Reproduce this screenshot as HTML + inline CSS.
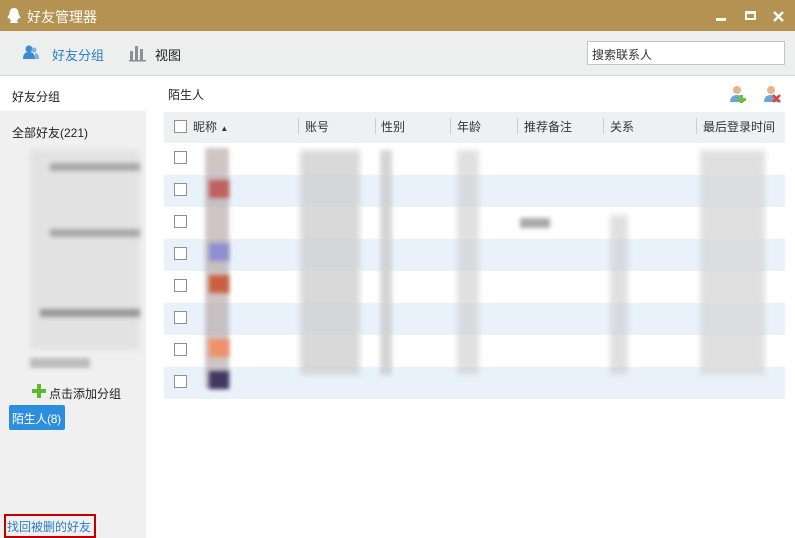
<!DOCTYPE html><html><head><meta charset="utf-8"><style>
*{margin:0;padding:0;box-sizing:border-box}
body{width:795px;height:538px;overflow:hidden;font-family:"Liberation Sans","Noto Sans CJK SC",sans-serif;font-size:12px;color:#222;background:#fff;position:relative}
.a{position:absolute;white-space:nowrap}
.g{position:absolute;background:#c8c8c8}
.cb{position:absolute;width:13px;height:13px;border:1px solid #8f8f8f;background:#fff}
.th{position:absolute;top:118px;font-size:12px;color:#333;white-space:nowrap}
.sep{position:absolute;top:118px;width:1px;height:16px;background:#ccc}
</style></head><body>
<div class="a" style="left:0;top:0;width:795px;height:31px;background:#b49252"></div>
<svg class="a" style="left:6px;top:7px" width="16" height="17" viewBox="0 0 16 17"><path d="M8 1C5 1 3.5 3.5 3.5 6c0 1-1.5 3-2 5 .5 1 1.5 0 2-.5-.3 1.5 1 3 2 3.5-1 .5-2 1-1 2h7c1-1 0-1.5-1-2 1-.5 2.3-2 2-3.5.5.5 1.5 1.5 2 .5-.5-2-2-4-2-5 0-2.5-1.5-5-4.5-5z" fill="#fff"/></svg>
<div class="a" style="left:27px;top:7px;color:#fff;font-size:14px">好友管理器</div>
<div class="a" style="left:716px;top:18px;width:10px;height:3px;background:#fff"></div>
<div class="a" style="left:745px;top:11px;width:11px;height:9px;border:2px solid #fff;border-top-width:3px"></div>
<svg class="a" style="left:773px;top:11px" width="11" height="11"><path d="M1 1l9 9M10 1l-9 9" stroke="#fff" stroke-width="2.4"/></svg>
<div class="a" style="left:0;top:31px;width:795px;height:45px;background:#edeeee;border-bottom:1px solid #d8d8d8"></div>
<svg class="a" style="left:22px;top:45px" width="18" height="16"><circle cx="7" cy="4" r="3.5" fill="#3b8bd0"/><path d="M1 14c0-5 2-7 6-7s6 2 6 7z" fill="#3b8bd0"/><circle cx="12" cy="5" r="2.5" fill="#7fb4e0"/><path d="M13 14h4c0-4-1-6-4-6z" fill="#7fb4e0"/></svg>
<div class="a" style="left:52px;top:45px;color:#2e7dc4;font-size:13px">好友分组</div>
<svg class="a" style="left:129px;top:44px" width="18" height="18"><rect x="1" y="7" width="3" height="10" fill="#8a8f96"/><rect x="6" y="2" width="3" height="15" fill="#8a8f96"/><rect x="11" y="5" width="3" height="12" fill="#8a8f96"/><rect x="0" y="16" width="17" height="1.5" fill="#8a8f96"/></svg>
<div class="a" style="left:155px;top:45px;font-size:13px">视图</div>
<div class="a" style="left:587px;top:41px;width:198px;height:24px;background:#fff;border:1px solid #c4c4c4;padding:4px 4px;font-size:12px;color:#333">搜索联系人</div>
<div class="a" style="left:0;top:77px;width:146px;height:461px;background:#f0f0f0"></div>
<div class="a" style="left:0;top:77px;width:146px;height:34px;background:#fff"></div>
<div class="a" style="left:12px;top:88px">好友分组</div>
<div class="a" style="left:12px;top:124px">全部好友(221)</div>
<div class="a" style="left:30px;top:150px;width:110px;height:200px;background:#ddd;filter:blur(3px);opacity:.7"></div>
<div class="g" style="left:50px;top:163px;width:90px;height:8px;background:#aaa;filter:blur(2px)"></div>
<div class="g" style="left:50px;top:229px;width:90px;height:8px;background:#aaa;filter:blur(2px)"></div>
<div class="g" style="left:40px;top:309px;width:100px;height:8px;background:#999;filter:blur(2px)"></div>
<div class="g" style="left:30px;top:358px;width:60px;height:10px;background:#bbb;filter:blur(2px)"></div>
<svg class="a" style="left:32px;top:384px" width="14" height="14"><path d="M5 0h4v5h5v4H9v5H5V9H0V5h5z" fill="#5cb82f"/></svg>
<div class="a" style="left:49px;top:385px">点击添加分组</div>
<div class="a" style="left:9px;top:405px;width:56px;height:25px;background:#2d8ee0;border-radius:2px;color:#fff;padding:5px 3px;font-size:12px;letter-spacing:-0.3px">陌生人(8)</div>
<div class="a" style="left:4px;top:514px;width:92px;height:24px;border:2px solid #c00000"></div>
<div class="a" style="left:7px;top:518px;color:#2e7dc4">找回被删的好友</div>
<div class="a" style="left:168px;top:86px">陌生人</div>
<svg class="a" style="left:729px;top:85px" width="18" height="18"><circle cx="8" cy="5" r="4" fill="#e8b48c"/><path d="M1 17c0-5 3-7 7-7s7 2 7 7z" fill="#6aa6d8"/><path d="M11 10h3v3h3v3h-3v3h-3v-3H8v-3h3z" fill="#6cc03a"/></svg>
<svg class="a" style="left:763px;top:85px" width="18" height="18"><circle cx="8" cy="5" r="4" fill="#e8b48c"/><path d="M1 17c0-5 3-7 7-7s7 2 7 7z" fill="#6aa6d8"/><path d="M10 10l7 7M17 10l-7 7" stroke="#e04040" stroke-width="2.5"/></svg>
<div class="a" style="left:164px;top:112px;width:621px;height:31px;background:#eef0f2"></div>
<div class="cb" style="left:174px;top:120px"></div>
<div class="th" style="left:193px">昵称 <span style="font-size:8px">▲</span></div>
<div class="sep" style="left:298px"></div><div class="th" style="left:305px">账号</div>
<div class="sep" style="left:375px"></div><div class="th" style="left:381px">性别</div>
<div class="sep" style="left:450px"></div><div class="th" style="left:457px">年龄</div>
<div class="sep" style="left:517px"></div><div class="th" style="left:524px">推荐备注</div>
<div class="sep" style="left:603px"></div><div class="th" style="left:610px">关系</div>
<div class="sep" style="left:696px"></div><div class="th" style="left:703px">最后登录时间</div>
<div class="a" style="left:164px;top:175px;width:621px;height:32px;background:#e9f2fa"></div>
<div class="a" style="left:164px;top:239px;width:621px;height:32px;background:#e9f2fa"></div>
<div class="a" style="left:164px;top:303px;width:621px;height:32px;background:#e9f2fa"></div>
<div class="a" style="left:164px;top:367px;width:621px;height:32px;background:#e9f2fa"></div>
<div class="cb" style="left:174px;top:151px"></div><div class="cb" style="left:174px;top:183px"></div><div class="cb" style="left:174px;top:215px"></div><div class="cb" style="left:174px;top:247px"></div><div class="cb" style="left:174px;top:279px"></div><div class="cb" style="left:174px;top:311px"></div><div class="cb" style="left:174px;top:343px"></div><div class="cb" style="left:174px;top:375px"></div>
<div class="g" style="left:205px;top:148px;width:24px;height:240px;background:#b0a0a0;filter:blur(2px);opacity:.6"></div>
<div class="g" style="left:209px;top:180px;width:20px;height:18px;background:#c06060;filter:blur(2px)"></div>
<div class="g" style="left:209px;top:243px;width:20px;height:18px;background:#9090d0;filter:blur(2px)"></div>
<div class="g" style="left:209px;top:275px;width:20px;height:18px;background:#c86040;filter:blur(2px)"></div>
<div class="g" style="left:209px;top:339px;width:20px;height:18px;background:#f0906a;filter:blur(2px)"></div>
<div class="g" style="left:209px;top:371px;width:20px;height:18px;background:#403860;filter:blur(2px)"></div>
<div class="g" style="left:300px;top:150px;width:60px;height:225px;background:#d0d0d0;filter:blur(3px);opacity:.8"></div>
<div class="g" style="left:380px;top:150px;width:12px;height:225px;background:#ccc;filter:blur(2px);opacity:.8"></div>
<div class="g" style="left:457px;top:150px;width:22px;height:225px;background:#ccc;filter:blur(3px);opacity:.6"></div>
<div class="g" style="left:520px;top:218px;width:30px;height:10px;background:#aaa;filter:blur(2px)"></div>
<div class="g" style="left:610px;top:215px;width:18px;height:160px;background:#ccc;filter:blur(3px);opacity:.6"></div>
<div class="g" style="left:700px;top:150px;width:65px;height:225px;background:#d4d4d4;filter:blur(3px);opacity:.7"></div>
</body></html>
